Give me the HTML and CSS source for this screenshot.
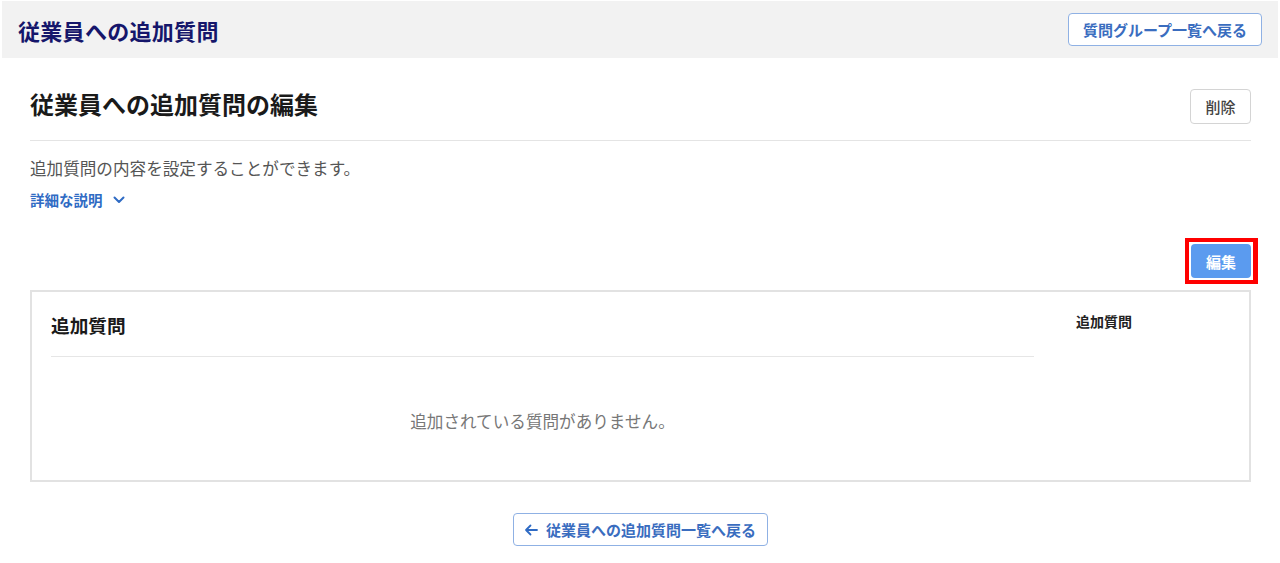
FILE: index.html
```html
<!DOCTYPE html>
<html lang="ja">
<head>
<meta charset="utf-8">
<link rel="stylesheet" href="styles.css">
</head>
<body>
<header class="topbar">
  <h1 class="topbar-title">従業員への追加質問</h1>
  <button class="btn btn-outline-blue">質問グループ一覧へ戻る</button>
</header>
<main class="main">
  <div class="page-head">
    <h2 class="page-title">従業員への追加質問の編集</h2>
    <button class="btn btn-gray">削除</button>
  </div>
  <p class="desc">追加質問の内容を設定することができます。</p>
  <div class="more">詳細な説明
    <svg class="chev" width="12" height="8" viewBox="0 0 12 8"><path d="M1.5 1.5 L6 6 L10.5 1.5" fill="none" stroke="#2f6bc4" stroke-width="2" stroke-linecap="round" stroke-linejoin="round"/></svg>
  </div>
  <div class="actions">
    <span class="highlight"><button class="btn btn-primary">編集</button></span>
  </div>
  <section class="card">
    <div class="card-main">
      <h3 class="card-title">追加質問</h3>
      <p class="empty">追加されている質問がありません。</p>
    </div>
    <aside class="card-side">追加質問</aside>
  </section>
  <div class="back-row">
    <button class="btn btn-outline-blue btn-back">
      <svg width="14" height="12" viewBox="0 0 14 12"><path d="M13 6 H2 M6.5 1.5 L2 6 L6.5 10.5" fill="none" stroke="#2f6bc4" stroke-width="1.8" stroke-linecap="round" stroke-linejoin="round"/></svg>
      従業員への追加質問一覧へ戻る
    </button>
  </div>
</main>
</body>
</html>
```
FILE: styles.css
```css
* { box-sizing: border-box; }
body {
  margin: 0;
  font-family: "Noto Sans CJK JP", "Noto Sans", sans-serif;
  color: #222;
  background: #fff;
}
button { font-family: inherit; cursor: pointer; }
.topbar {
  display: flex;
  align-items: center;
  justify-content: space-between;
  height: 57px;
  margin: 1px 2px 0 2px;
  padding: 0 16px;
  background: #f2f2f2;
}
.topbar-title {
  margin: 0;
  font-size: 22px;
  font-weight: 700;
  color: #15166b;
  letter-spacing: 0.3px;
}
.btn {
  border-radius: 4px;
  font-size: 15px;
  font-weight: 700;
  line-height: 1;
  background: #fff;
}
.btn-outline-blue {
  height: 33px;
  padding: 0 14px;
  border: 1.5px solid #8fb1e4;
  color: #3a6dbf;
}
.btn-gray {
  height: 35px;
  width: 61px;
  border: 1.5px solid #d4d4d4;
  color: #444;
  font-weight: 500;
}
.btn-primary {
  display: block;
  height: 34px;
  width: 60px;
  border: none;
  background: #5b9bef;
  color: #fff;
}
.highlight {
  display: block;
  padding: 2px;
  margin: -6px -7px -6px 0;
  border: 4px solid #ff0000;
  border-right-width: 5px;
}
.main {
  padding: 0 29px 0 30px;
}
.page-head {
  display: flex;
  align-items: center;
  justify-content: space-between;
  padding: 31px 0 16px;
  border-bottom: 1.5px solid #e4e4e4;
}
.page-title {
  margin: -6px 0 0;
  font-size: 24px;
  font-weight: 700;
  color: #1a1a1a;
}
.desc {
  margin: 15px 0 0;
  font-size: 16.6px;
  color: #555;
  line-height: 24px;
}
.more {
  display: flex;
  align-items: center;
  gap: 10px;
  margin-top: 10px;
  font-size: 14.5px;
  font-weight: 700;
  color: #2f6bc4;
  line-height: 20px;
}
.actions {
  display: flex;
  justify-content: flex-end;
  margin-top: 34px;
}
.card {
  display: grid;
  grid-template-columns: 1fr 215px;
  margin-top: 12px;
  height: 192px;
  border: 2px solid #e2e2e2;
}
.card-main {
  padding: 0 0 0 19px;
}
.card-title {
  margin: 0;
  padding: 18px 0 16px;
  font-size: 18.7px;
  font-weight: 700;
  line-height: 30px;
  color: #1a1a1a;
  border-bottom: 1.5px solid #e6e6e6;
}
.empty {
  margin: 52px 0 0;
  text-align: center;
  font-size: 16.6px;
  color: #777;
  line-height: 24px;
}
.card-side {
  padding: 19px 0 0 42px;
  font-size: 14px;
  font-weight: 700;
  color: #222;
}
.back-row {
  display: flex;
  justify-content: center;
  margin-top: 31px;
}
.btn-back {
  display: flex;
  align-items: center;
  gap: 8px;
  height: 33px;
  padding: 0 11px 0 10px;
}
```
